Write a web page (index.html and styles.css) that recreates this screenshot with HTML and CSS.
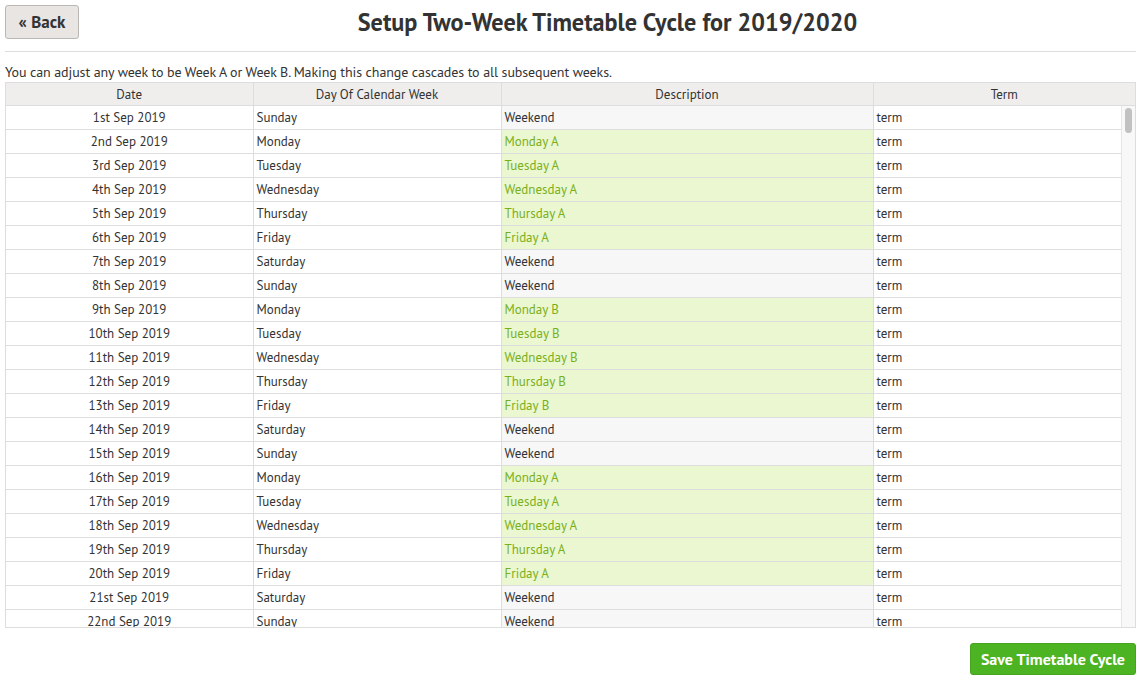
FILE: index.html
```html
<!DOCTYPE html>
<html>
<head>
<meta charset="utf-8">
<link rel="stylesheet" href="styles.css">
</head>
<body>
<div class="page">
  <header class="top">
    <button class="back">« Back</button>
    <h1 class="title">Setup Two-Week Timetable Cycle for 2019/2020</h1>
  </header>
  <p class="note">You can adjust any week to be Week A or Week B. Making this change cascades to all subsequent weeks.</p>
  <div class="grid">
    <table class="head">
      <colgroup><col class="c-date"><col class="c-day"><col class="c-desc"><col></colgroup>
      <tr><th>Date</th><th>Day Of Calendar Week</th><th>Description</th><th>Term</th></tr>
    </table>
    <div class="body">
      <div class="pane">
        <table class="rows">
          <colgroup><col class="c-date"><col class="c-day"><col class="c-desc"><col></colgroup>
          <tbody id="rows"></tbody>
        </table>
      </div>
      <div class="scrollbar"><div class="thumb"></div></div>
    </div>
  </div>
  <div class="actions">
    <button class="save">Save Timetable Cycle</button>
  </div>
</div>
<script src="app.js"></script>
</body>
</html>
```
FILE: styles.css
```css
html, body { margin: 0; padding: 0; background: #fff; }
body { font-family: "PT Sans", Lato, "Liberation Sans", sans-serif; color: #333; font-size: 13px; }
.page { padding: 5px 7px 0 5px; }
.top { display: flex; align-items: center; height: 46px; border-bottom: 1px solid #ddd; }
.back {
  font-family: inherit; font-weight: bold; font-size: 17px; color: #333;
  background: #e8e5e3; border: 1px solid #b9b6b4; border-radius: 3px;
  width: 74px; height: 34px; margin-top: -12px; padding: 0; cursor: pointer;
}
.title { flex: 1; text-align: center; margin: -12px 0 0 0; font-size: 24.2px; font-weight: bold; color: #333; }
.note { margin: 12px 0 2px 0; font-size: 14px; letter-spacing: -0.1px; line-height: 16px; }
.grid { border: 1px solid #ddd; }
table { border-collapse: collapse; table-layout: fixed; width: 100%; }
.c-date { width: 247px; }
.c-day { width: 248px; }
.c-desc { width: 372px; }
.head th { background: #efeeed; font-weight: normal; height: 22px; padding: 0; font-size: 13px; border-left: 1px solid #ddd; color: #333; }
.head th:first-child { border-left: 0; }
.body { display: flex; height: 521px; overflow: hidden; border-top: 1px solid #ddd; }
.pane { flex: 1; overflow: hidden; }
.scrollbar { width: 14px; flex: none; background: #f8f8f8; border-left: 1px solid #e6e6e6; padding: 2px 3px 0 3px; box-sizing: border-box; }
.thumb { width: 7px; height: 25px; background: #c1c1c1; border-radius: 4px; }
.rows td { height: 23px; padding: 0 0 0 3px; border-left: 1px solid #ddd; border-bottom: 1px solid #ddd; white-space: nowrap; overflow: hidden; }
.rows td:first-child { border-left: 0; text-align: center; padding: 0; }
.rows td.wk { background: #f7f7f7; }
.rows td.ab { background: #eaf7d0; color: #7aaf1c; }
.actions { display: flex; justify-content: flex-end; padding-top: 15px; }
.save {
  font-family: inherit; font-weight: bold; font-size: 16px; color: #fff;
  background: #4cb322; border: 1px solid #45a41f; border-radius: 3px;
  height: 32px; padding: 0 10px; cursor: pointer;
}
```
FILE: app.js
```js
(function(){
  var days = ["Sunday","Monday","Tuesday","Wednesday","Thursday","Friday","Saturday"];
  var months = ["Jan","Feb","Mar","Apr","May","Jun","Jul","Aug","Sep","Oct","Nov","Dec"];
  function suf(n){ if(n%100>=11&&n%100<=13) return "th"; var r=n%10; return r==1?"st":r==2?"nd":r==3?"rd":"th"; }
  var d = new Date(2019, 8, 1);
  var end = new Date(2020, 7, 31);
  var week = -1;
  var html = "";
  while (d <= end) {
    var wd = d.getDay();
    if (wd === 0) week++;
    var letter = week % 2 === 0 ? "A" : "B";
    var date = d.getDate() + suf(d.getDate()) + " " + months[d.getMonth()] + " " + d.getFullYear();
    var desc, cls;
    if (wd === 0 || wd === 6) { desc = "Weekend"; cls = "wk"; } else { desc = days[wd] + " " + letter; cls = "ab"; }
    html += "<tr><td>" + date + "</td><td>" + days[wd] + "</td><td class=\"" + cls + "\">" + desc + "</td><td>term</td></tr>";
    d.setDate(d.getDate() + 1);
  }
  document.getElementById("rows").innerHTML = html;
})();
```
